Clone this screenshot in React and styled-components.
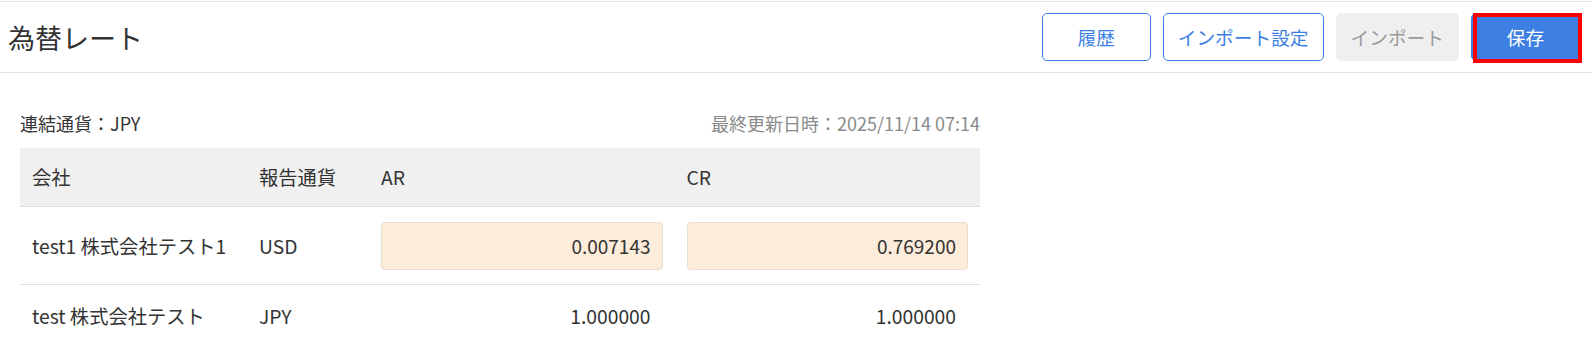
import React from "react";
import styled, { createGlobalStyle } from "styled-components";

const GlobalStyle = createGlobalStyle`
  html, body { margin: 0; padding: 0; background: #fff; }
  body {
    font-family: "Noto Sans CJK JP", "Noto Sans", sans-serif;
    color: #333;
    -webkit-font-smoothing: antialiased;
  }
  * { box-sizing: border-box; }
`;

const Page = styled.div`
  width: 1592px;
  padding-top: 1px;
`;

const Header = styled.header`
  display: flex;
  align-items: center;
  justify-content: space-between;
  height: 72px;
  border-top: 1px solid #e2e2e2;
  border-bottom: 1px solid #e2e2e2;
  padding: 0 12px 0 8px;
`;

const Title = styled.h1`
  margin: 0;
  font-size: 27px;
  font-weight: 400;
  color: #333;
  line-height: 1;
`;

const Actions = styled.div`
  display: flex;
  align-items: center;
  gap: 12px;
`;

const Button = styled.button`
  position: relative;
  height: 48px;
  min-width: 109px;
  padding: 0 14px;
  border-radius: 5px;
  font-family: inherit;
  font-size: 18.7px;
  line-height: 1;
  cursor: pointer;
  border: 1px solid
    ${(p) =>
      p.$variant === "primary"
        ? "#3d7fe3"
        : p.$variant === "disabled"
        ? "#efefef"
        : "#3d7fe3"};
  background: ${(p) =>
    p.$variant === "primary"
      ? "#3d7fe3"
      : p.$variant === "disabled"
      ? "#efefef"
      : "#fff"};
  color: ${(p) =>
    p.$variant === "primary"
      ? "#fff"
      : p.$variant === "disabled"
      ? "#9a9a9a"
      : "#3d7fe3"};
  ${(p) =>
    p.$highlight &&
    `
    &::after {
      content: "";
      position: absolute;
      left: 1px;
      right: -3px;
      top: -1px;
      bottom: -3px;
      border: 4px solid #ff0000;
      pointer-events: none;
    }
  `}
`;

const Body = styled.main`
  padding: 37px 20px 0;
  width: 1000px;
`;

const InfoLine = styled.div`
  display: flex;
  justify-content: space-between;
  align-items: center;
  height: 26px;
  margin-bottom: 12px;
  font-size: 18px;
`;

const Label = styled.span`
  color: #333;
`;

const Updated = styled.span`
  color: #8a8a8a;
`;

const Table = styled.div`
  width: 960px;
`;

const Row = styled.div`
  display: grid;
  grid-template-columns: 227px 122px 1fr 1fr;
  align-items: center;
  min-height: ${(p) => p.$height}px;
  background: ${(p) => (p.$head ? "#f0f0f0" : "#fff")};
  border-bottom: 1px solid #e0e0e0;
  font-size: 19.3px;
`;

const Cell = styled.div`
  padding: ${(p) => (p.$num ? "0 24px 0 12px" : "0 12px")};
  text-align: ${(p) => (p.$num ? "right" : "left")};
  white-space: nowrap;
`;

const RateInput = styled.input`
  width: 100%;
  height: 48px;
  background: #fdecd9;
  border: 1px solid #e9ddd0;
  border-radius: 4px;
  padding: 0 11px;
  text-align: right;
  font-family: inherit;
  font-size: 19px;
  color: #333;
  outline: none;
`;

const rows = [
  { company: "test1 株式会社テスト1", currency: "USD", ar: "0.007143", cr: "0.769200", editable: true },
  { company: "test 株式会社テスト", currency: "JPY", ar: "1.000000", cr: "1.000000", editable: false },
];

export default function App() {
  return (
    <>
      <GlobalStyle />
      <Page>
        <Header>
          <Title>為替レート</Title>
          <Actions>
            <Button>履歴</Button>
            <Button>インポート設定</Button>
            <Button $variant="disabled">インポート</Button>
            <Button $variant="primary" $highlight>保存</Button>
          </Actions>
        </Header>
        <Body>
          <InfoLine>
            <Label>連結通貨：JPY</Label>
            <Updated>最終更新日時：2025/11/14 07:14</Updated>
          </InfoLine>
          <Table>
            <Row $head $height={59}>
              <Cell>会社</Cell>
              <Cell>報告通貨</Cell>
              <Cell>AR</Cell>
              <Cell>CR</Cell>
            </Row>
            {rows.map((r) => (
              <Row key={r.company} $height={r.editable ? 78 : 62}>
                <Cell>{r.company}</Cell>
                <Cell>{r.currency}</Cell>
                {r.editable ? (
                  <>
                    <Cell><RateInput defaultValue={r.ar} /></Cell>
                    <Cell><RateInput defaultValue={r.cr} /></Cell>
                  </>
                ) : (
                  <>
                    <Cell $num>{r.ar}</Cell>
                    <Cell $num>{r.cr}</Cell>
                  </>
                )}
              </Row>
            ))}
          </Table>
        </Body>
      </Page>
    </>
  );
}
